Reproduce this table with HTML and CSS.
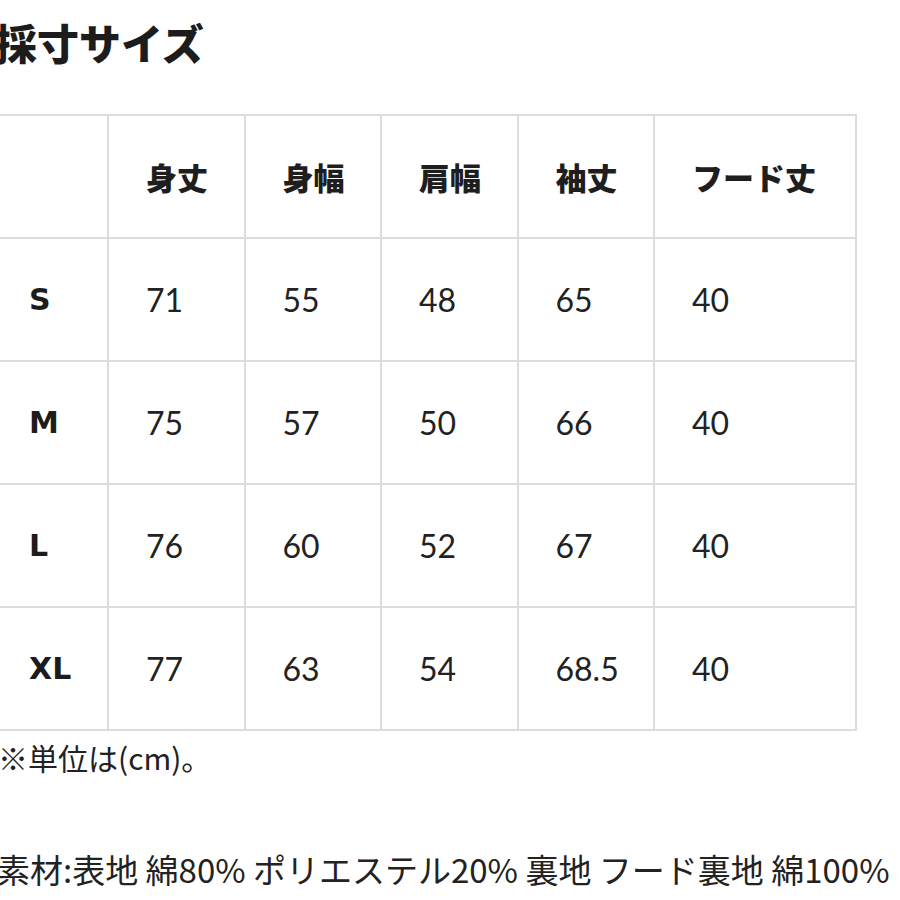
FILE: index.html
```html
<!DOCTYPE html>
<html lang="ja">
<head>
<meta charset="utf-8">
<link rel="stylesheet" href="styles.css">
</head>
<body>
<div class="page">
  <h1 class="title">採寸サイズ</h1>
  <table class="sizes">
    <colgroup>
      <col class="c-label"><col class="c-num"><col class="c-num"><col class="c-num"><col class="c-num"><col class="c-last">
    </colgroup>
    <thead>
      <tr><th class="label"></th><th>身丈</th><th>身幅</th><th>肩幅</th><th>袖丈</th><th>フード丈</th></tr>
    </thead>
    <tbody>
      <tr><td class="label">S</td><td>71</td><td>55</td><td>48</td><td>65</td><td>40</td></tr>
      <tr><td class="label">M</td><td>75</td><td>57</td><td>50</td><td>66</td><td>40</td></tr>
      <tr><td class="label">L</td><td>76</td><td>60</td><td>52</td><td>67</td><td>40</td></tr>
      <tr><td class="label">XL</td><td>77</td><td>63</td><td>54</td><td>68.5</td><td>40</td></tr>
    </tbody>
  </table>
  <p class="note">※単位は(cm)。</p>
  <p class="material">素材:表地 綿80% ポリエステル20% 裏地 フード裏地 綿100%</p>
  <div class="rule"></div>
</div>
</body>
</html>
```
FILE: styles.css
```css
html, body {
  margin: 0;
  padding: 0;
  background: #ffffff;
}
body {
  font-family: "Noto Sans CJK JP", "Noto Sans", sans-serif;
  color: #222222;
  overflow: hidden;
}
.page {
  width: 900px;
  height: 900px;
  overflow: hidden;
}
.title {
  margin: 0 0 0 -5px;
  height: 84px;
  display: flex;
  align-items: center;
  font-size: 42px;
  font-weight: 900;
  line-height: 1;
  color: #1c1c1c;
}
.sizes {
  margin-top: 30px;
  border-collapse: collapse;
  table-layout: fixed;
  width: 856px;
}
.c-label { width: 108px; }
.c-num { width: 136.5px; }
.c-last { width: 202px; }
.sizes th,
.sizes td {
  height: 121px;
  padding: 0 0 0 37px;
  border: 2px solid #dcdcdc;
  text-align: left;
  vertical-align: middle;
}
.sizes th:first-child,
.sizes td:first-child {
  border-left: none;
}
.sizes th {
  font-family: "Noto Sans CJK JP", sans-serif;
  font-size: 31px;
  font-weight: 900;
  color: #1e1e1e;
}
.sizes td {
  font-family: "Lato", "Noto Sans", sans-serif;
  font-size: 32px;
  font-weight: 400;
  color: #222222;
}
.sizes td.label {
  padding-left: 29px;
  font-family: "DejaVu Sans", sans-serif;
  font-size: 30px;
  font-weight: 700;
  color: #1c1c1c;
}
.note {
  margin: 10px 0 0 -2px;
  height: 33px;
  font-size: 30px;
  line-height: 33px;
  font-weight: 400;
}
.material {
  margin: 79px 0 0 -3px;
  font-size: 33px;
  line-height: 1;
  font-weight: 400;
  white-space: nowrap;
}
.rule {
  margin-top: 14px;
  height: 2px;
  background: #8a8a8a;
}
```
